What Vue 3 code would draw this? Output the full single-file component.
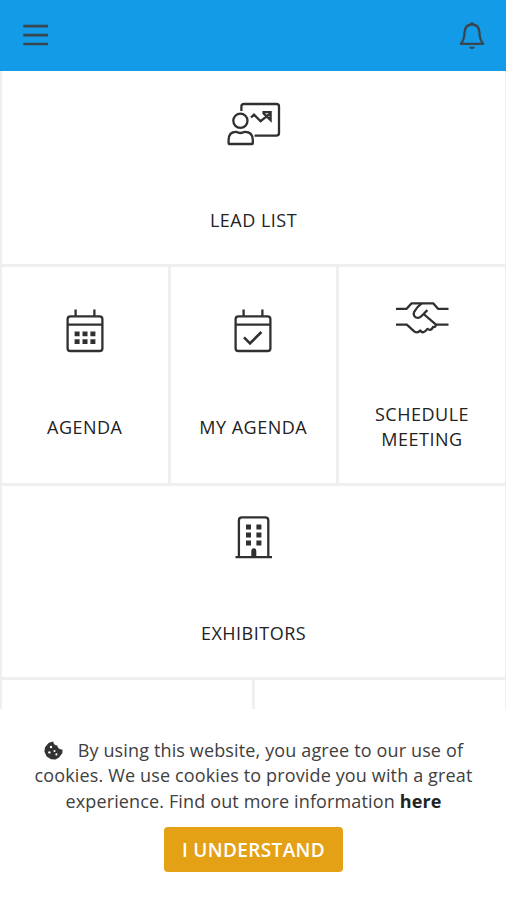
<template>
  <div class="app">
    <header class="topbar">
      <button class="icon-btn" aria-label="Menu">
        <svg width="26" height="24" viewBox="0 0 26 24" stroke="#38474f" stroke-width="2.7">
          <path d="M0.3 2.2H25M0.3 11.2H25M0.3 20H25" />
        </svg>
      </button>
      <button class="icon-btn" aria-label="Notifications">
        <svg
          width="26"
          height="30"
          viewBox="0 0 26 30"
          fill="none"
          stroke="#38474f"
          stroke-width="2.3"
          stroke-linejoin="round"
        >
          <path d="M13 3.5C8.2 3.5 5.8 6.8 5.6 11.2C5.4 16.5 4.7 19.5 1.8 22.8H24.2C21.3 19.5 20.6 16.5 20.4 11.2C20.2 6.8 17.8 3.5 13 3.5Z" />
          <path d="M13 3.5V1.2" stroke-width="2.8" />
          <path d="M10 25.8H16C15.6 28.8 10.4 28.8 10 25.8Z" fill="#38474f" stroke="none" />
        </svg>
      </button>
    </header>

    <main class="tiles">
      <section
        v-for="tile in tiles"
        :key="tile.icon"
        class="tile"
        :class="[tile.size, tile.icon]"
      >
        <svg
          class="tile-icon"
          viewBox="0 0 60 50"
          fill="none"
          stroke="#303030"
          stroke-width="2.3"
          stroke-linejoin="round"
        >
          <template v-if="tile.icon === 'lead'">
            <path d="M17.4 13V8.6Q17.4 6 20 6H52.4Q55 6 55 8.6V35Q55 37.6 52.4 37.6H30.6" />
            <circle cx="16.4" cy="22.8" r="7.1" />
            <path d="M4.6 45.2V42Q4.6 33.8 12.1 33.8Q16.4 36.2 20.8 33.8Q28.8 33.8 28.8 42V45.2Q28.8 46 28 46H5.4Q4.6 46 4.6 45.2Z" />
            <path d="M27 19.5L30 16.6L36.6 23.2L46 15.6M38.4 14.2H46.6V22L39 14.8" stroke-linejoin="miter" />
          </template>
          <template v-else-if="tile.icon === 'agenda' || tile.icon === 'my-agenda'">
            <rect x="12.6" y="11.4" width="34.8" height="34.6" rx="2.8" />
            <path d="M12.6 19.6H47.4M20.6 4.6V11M39.4 4.6V11" />
            <path
              v-if="tile.icon === 'agenda'"
              d="M19.6 28.8h5M27.5 28.8h5M35.4 28.8h5M19.6 36.6h5M27.5 36.6h5M35.4 36.6h5"
              stroke-width="4.8"
            />
            <path v-else d="M21 32.4L27 38.4L38.4 27" stroke-width="2.6" stroke-linejoin="miter" />
          </template>
          <template v-else-if="tile.icon === 'meeting'">
            <path d="M4 15.8H14.6L19.4 10.4H41.4L46 15.8H56.5" />
            <path d="M4 31.7H14.8L22.2 38.4Q25.4 40.8 28.2 37.5Q31.2 41.7 35.4 35.9Q39.2 38.4 41 34Q44 34.6 43.8 31.7H56.5" />
            <path d="M29.8 10.4Q25.5 13.2 22.2 18.8C20.8 21.7 22.5 25.1 26.2 24.8C29.3 24.6 31.2 21 35.4 17.2M31.6 21L43.7 31.4" />
          </template>
          <template v-else-if="tile.icon === 'exhibitors'">
            <path d="M14.9 46V9.4Q14.9 6.4 17.9 6.4H41.3Q44.3 6.4 44.3 9.4V46M11.5 46.2H48" />
            <path
              d="M22 16h5M32.4 16h5M22 24h5M32.4 24h5M22 32h5M32.4 32h5"
              stroke-width="4.8"
            />
            <path d="M27.3 46V40.5Q27.3 37.3 29.8 37.3Q32.3 37.3 32.3 40.5V46Z" fill="#303030" stroke="none" />
          </template>
        </svg>
        <h2 class="tile-label">{{ tile.label }}</h2>
      </section>
      <section class="tile half"></section>
      <section class="tile half"></section>
    </main>

    <footer class="cookies">
      <p class="cookies-text">
        <svg class="cookie-icon" width="19" height="19" viewBox="0 0 19 19">
          <path
            d="M9.2 0.4C9.4 3 11.2 4.5 13.3 4.5C13.4 6.8 15.5 8.5 18.6 8.7L18.3 12.2L15 16.5L11.5 18.6L7 18.2L2.7 15.6L0.4 10.8L1 6.2L4.8 1.8Z"
            fill="#333"
          />
          <g fill="#fff">
            <circle cx="7" cy="6" r="1.2" />
            <circle cx="5.4" cy="11.4" r="1.2" />
            <circle cx="10.5" cy="10" r="1" />
            <circle cx="12.4" cy="13.4" r="1.1" />
          </g>
        </svg>
        By using this website, you agree to our use of<br />
        cookies. We use cookies to provide you with a great<br />
        experience. Find out more information <a class="more">here</a>
      </p>
      <button class="accept">I UNDERSTAND</button>
    </footer>
  </div>
</template>

<script setup>
const tiles = [
  { icon: "lead", label: "LEAD LIST", size: "full" },
  { icon: "agenda", label: "AGENDA", size: "third" },
  { icon: "my-agenda", label: "MY AGENDA", size: "third" },
  { icon: "meeting", label: "SCHEDULE MEETING", size: "third" },
  { icon: "exhibitors", label: "EXHIBITORS", size: "full" },
];
</script>

<style>
body {
  margin: 0;
  background: #fff;
}
</style>

<style scoped>
.app {
  display: flex;
  flex-direction: column;
  height: 900px;
  overflow: hidden;
  box-sizing: border-box;
  font-family: "Open Sans", "Noto Sans", sans-serif;
  color: #404040;
}

.topbar {
  display: flex;
  flex: none;
  align-items: center;
  justify-content: space-between;
  box-sizing: border-box;
  height: 71px;
  padding: 0 21px 0 23px;
  background: #149be7;
}

.icon-btn {
  display: flex;
  padding: 0;
  border: 0;
  background: none;
}

.tiles {
  display: grid;
  flex: none;
  grid-template-columns: 84px 84.5px 84.5px 84px 83px 83px;
  grid-template-rows: 193px 216px 191px 29px;
  gap: 3px 0;
  box-sizing: border-box;
  height: 638px;
  padding: 0 1px 0 2px;
  background: #efefef;
}

.tile {
  display: flex;
  flex-direction: column;
  align-items: center;
  box-sizing: border-box;
  padding-top: 27px;
  background: #fff;
}

.full {
  grid-column: span 6;
}

.third {
  grid-column: span 2;
  padding-top: 38px;
}

.half {
  grid-column: span 3;
}

.agenda,
.my-agenda,
.half:nth-last-child(2) {
  border-right: 3px solid #efefef;
}

.meeting {
  padding-top: 26px;
}

.exhibitors {
  padding-top: 25px;
}

.tile-icon {
  flex: none;
  width: 60px;
  height: 50px;
}

.tile-label {
  margin: 59px 0 0;
  max-width: 120px;
  font-size: 18px;
  font-weight: 400;
  line-height: 26px;
  letter-spacing: 0.5px;
  text-align: center;
  color: #222;
}

.meeting .tile-label {
  line-height: 25px;
}

.exhibitors .tile-label {
  margin-top: 59px;
}

.cookies {
  display: flex;
  flex: 1;
  flex-direction: column;
  align-items: center;
  padding: 29px 0 0 1px;
  background: #fff;
}

.cookies-text {
  margin: 0;
  font-size: 18px;
  line-height: 25.3px;
  letter-spacing: 0.14px;
  text-align: center;
  white-space: nowrap;
}

.cookie-icon {
  margin-right: 10px;
  vertical-align: -3px;
}

.more {
  font-weight: 700;
  color: #222;
}

.accept {
  width: 179px;
  height: 45px;
  margin-top: 13px;
  padding: 1px 0 0;
  border: 0;
  border-radius: 4px;
  background: #e4a115;
  color: #fff;
  font-family: inherit;
  font-size: 19px;
  font-weight: 600;
  letter-spacing: 0.35px;
}
</style>
